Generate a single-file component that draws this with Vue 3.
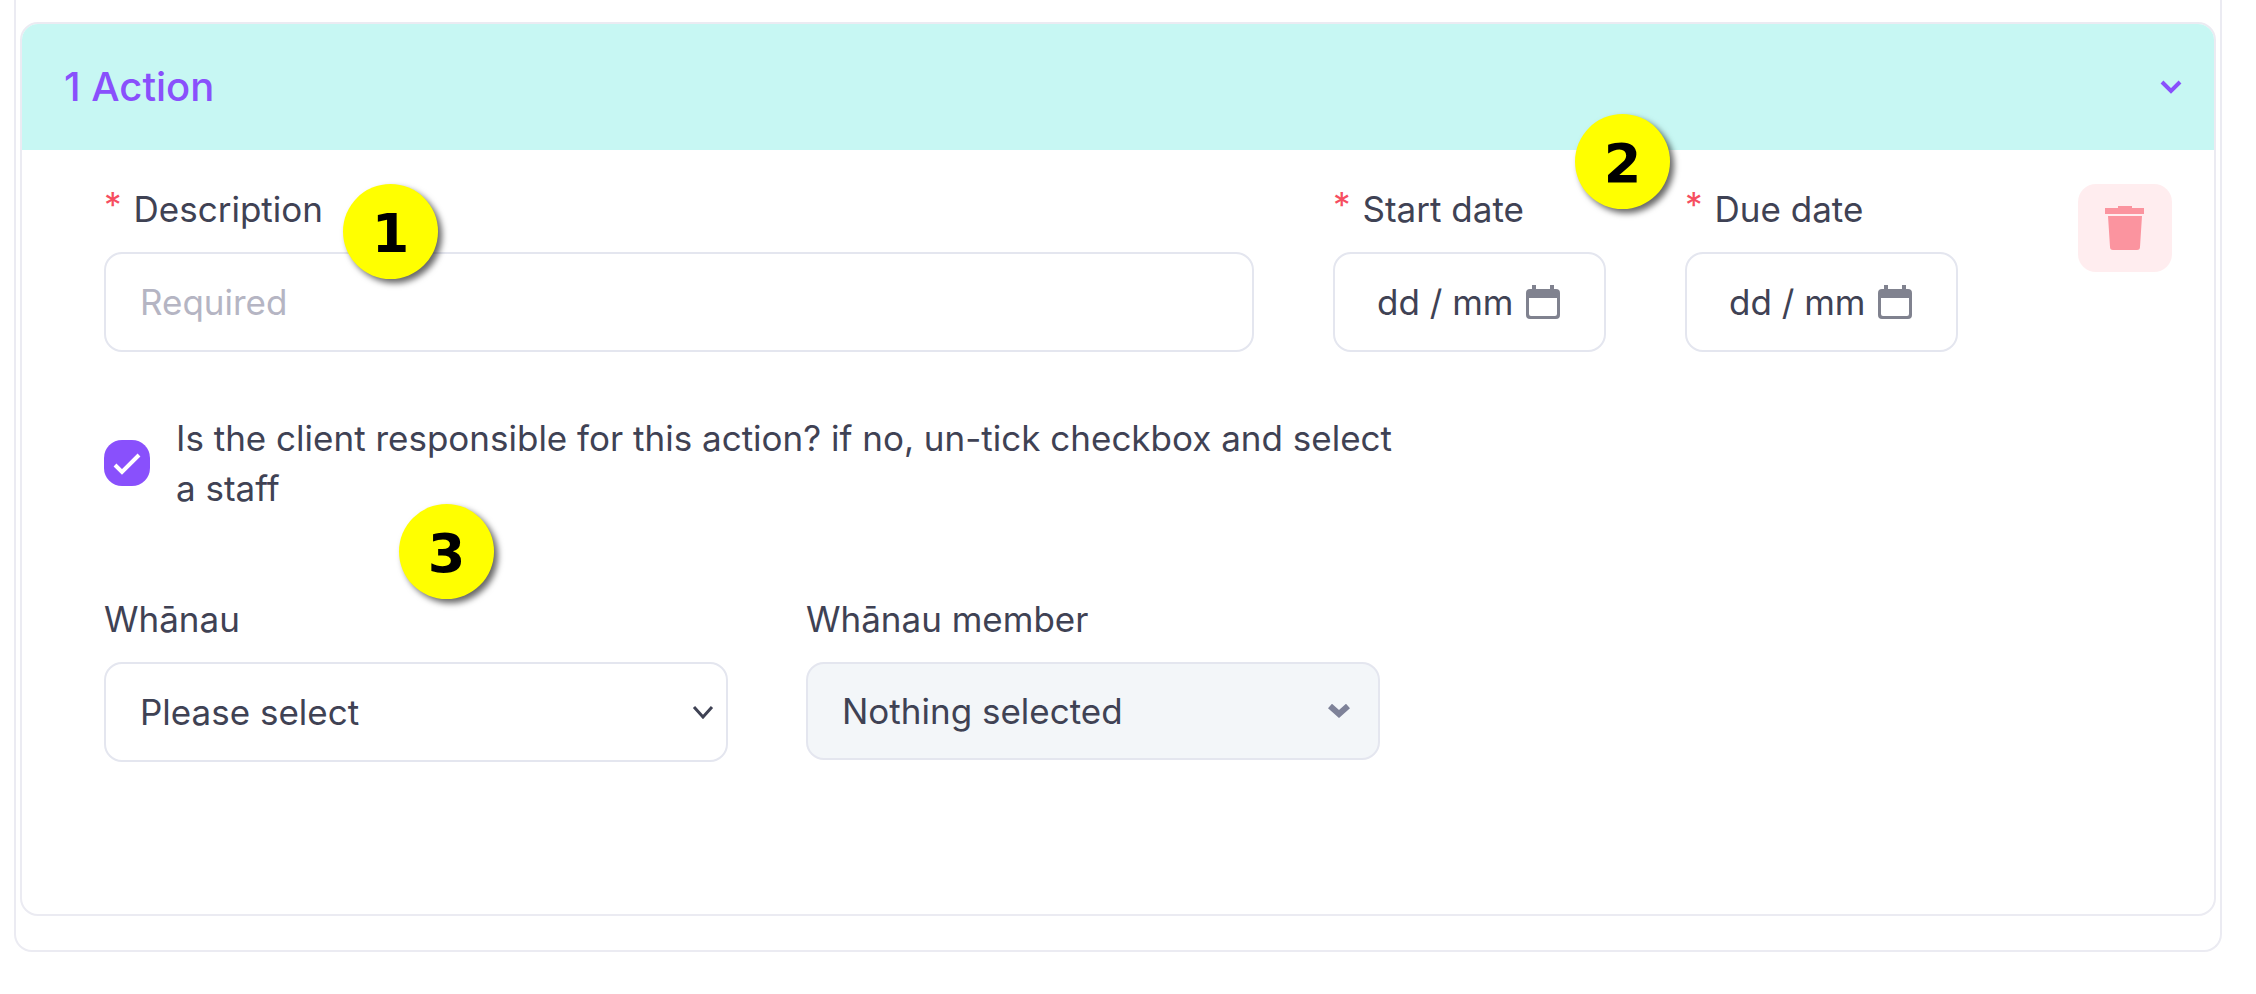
<script setup>
import { reactive, ref } from 'vue';

const isOpen = ref(true);

const action = reactive({
  description: '',
  startDate: '',
  dueDate: '',
  isClientResponsible: true,
  whanau: '',
  member: '',
});

const dateFields = [
  { key: 'startDate', label: 'Start date' },
  { key: 'dueDate', label: 'Due date' },
];

// the box only has room for the day and the month
const formatDate = (value) => {
  if (!value)
    return 'dd / mm';
  const [, month, day] = value.split('-');
  return `${day} / ${month}`;
};

const resetAction = () => {
  action.description = '';
  action.startDate = '';
  action.dueDate = '';
};
</script>

<template>
  <main class="page">
    <div class="panel">
      <section class="card">
        <button
          type="button"
          class="cardHeader"
          :aria-expanded="isOpen"
          @click="isOpen = !isOpen"
        >
          <span>1 Action</span>
          <svg class="headerChevron" width="22" height="14" viewBox="0 0 22 14" fill="none">
            <path d="M2 2L11 11L20 2" stroke-width="4" />
          </svg>
        </button>

        <form v-if="isOpen" class="cardBody" @submit.prevent>
          <div class="mainRow">
            <div class="field">
              <label class="label" for="description"><span class="required">*</span>Description</label>
              <input
                id="description"
                v-model="action.description"
                class="control"
                type="text"
                placeholder="Required"
              >
            </div>

            <div v-for="field in dateFields" :key="field.key" class="field">
              <label class="label" :for="field.key"><span class="required">*</span>{{ field.label }}</label>
              <div class="dateBox">
                <input
                  :id="field.key"
                  v-model="action[field.key]"
                  class="control dateInput"
                  type="date"
                >
                <div class="dateFace" aria-hidden="true">
                  <span class="dateText">{{ formatDate(action[field.key]) }}</span>
                  <svg width="34" height="34" viewBox="0 0 34 34">
                    <path
                      fill-rule="evenodd"
                      d="M6 0H10V4H24V0H28V4H30Q34 4 34 8V30Q34 34 30 34H4Q0 34 0 30V8Q0 4 4 4H6ZM3 13V29Q3 31 5 31H29Q31 31 31 29V13Z"
                    />
                  </svg>
                </div>
              </div>
            </div>

            <button type="button" class="deleteButton" aria-label="Delete action" @click="resetAction">
              <svg width="40" height="46" viewBox="0 0 40 46">
                <path d="M0 3H13V1H27V3H39V9H0Z" />
                <path d="M3 11H37L35 42Q35 45 32 45H8Q5 45 5 42Z" />
              </svg>
            </button>
          </div>

          <div class="checkRow">
            <input
              id="clientResponsible"
              v-model="action.isClientResponsible"
              class="checkbox"
              type="checkbox"
            >
            <svg class="checkMark" width="46" height="46" viewBox="0 0 46 46" fill="none">
              <path d="M11 25L18 32L35 15" stroke-width="4" />
            </svg>
            <label for="clientResponsible">
              Is the client responsible for this action? if no, un-tick checkbox and select a staff
            </label>
          </div>

          <div class="selectRow">
            <div class="field">
              <label class="label" for="whanau">Whānau</label>
              <div class="selectBox">
                <select id="whanau" v-model="action.whanau" class="control">
                  <option value="">Please select</option>
                </select>
                <svg class="selectArrow" width="22" height="14" viewBox="0 0 22 14" fill="none">
                  <path d="M2 2L11 12L20 2" stroke-width="3" />
                </svg>
              </div>
            </div>
            <div class="field">
              <label class="label" for="member">Whānau member</label>
              <div class="selectBox member">
                <select id="member" v-model="action.member" class="control" disabled>
                  <option value="">Nothing selected</option>
                </select>
                <svg class="selectArrow" width="22" height="14" viewBox="0 0 22 14" fill="none">
                  <path d="M2 2L11 10L20 2" stroke-width="6" />
                </svg>
              </div>
            </div>
          </div>
        </form>
      </section>
    </div>

    <span class="marker markerOne">1</span>
    <span class="marker markerTwo">2</span>
    <span class="marker markerThree">3</span>
  </main>
</template>

<style>
body {
  background: #fff;
}
</style>

<style scoped>
.page {
  color: #3f4254;
  font-family: Inter, "Open Sans", sans-serif;
  font-size: 35px;
  line-height: 50px;
  padding: 0 34px 42px 14px;
  position: relative;
}

.page * {
  box-sizing: border-box;
}

.panel {
  border: 2px solid #ebebf2;
  border-radius: 0 0 18px 18px;
  border-top: 0;
  padding: 22px 4px 34px;
}

.card {
  border: 2px solid #ebebf2;
  border-radius: 18px;
  overflow: hidden;
}

.cardHeader {
  align-items: center;
  background: #c7f7f3;
  border: 0;
  color: #8950fc;
  cursor: pointer;
  display: flex;
  font-family: inherit;
  font-size: 40px;
  font-weight: 500;
  justify-content: space-between;
  line-height: 50px;
  padding: 38px 32px 38px 42px;
  width: 100%;
}

.headerChevron {
  stroke: #8950fc;
}

.cardBody {
  padding: 34px 42px 152px 82px;
}

.mainRow {
  align-items: start;
  column-gap: 79px;
  display: grid;
  grid-template-columns: 1150fr 273fr 273fr 135px;
}

.field {
  display: flex;
  flex-direction: column;
  gap: 18px;
  min-width: 0;
}

.label {
  white-space: nowrap;
}

.required {
  color: #f64e60;
  line-height: 1;
  margin-right: 12px;
  vertical-align: 4px;
}

.control {
  appearance: none;
  background: #fff;
  border: 2px solid #e4e6ef;
  border-radius: 18px;
  color: inherit;
  font: inherit;
  height: 100px;
  margin: 0;
  min-width: 0;
  outline: 0;
  padding: 0 34px;
  width: 100%;
}

.control::placeholder {
  color: #b5b5c3;
  opacity: 1;
}

.control:focus {
  border-color: #8950fc;
}

.control:disabled {
  background: #f3f6f9;
  height: 98px;
  opacity: 1;
}

.dateBox,
.selectBox {
  display: grid;
  grid-template-columns: minmax(0, 1fr);
}

.dateBox > *,
.selectBox > * {
  grid-area: 1 / 1;
}

.dateInput::-webkit-datetime-edit {
  opacity: 0;
}

.dateInput::-webkit-calendar-picker-indicator {
  opacity: 0;
}

.dateFace {
  align-items: center;
  display: flex;
  gap: 8px;
  padding: 0 46px 0 44px;
  pointer-events: none;
}

.dateFace svg {
  fill: #80828f;
  flex: none;
}

.dateText {
  flex: 1;
  min-width: 0;
  overflow: hidden;
  white-space: nowrap;
}

.deleteButton {
  align-items: center;
  background: #ffedef;
  border: 0;
  border-radius: 18px;
  cursor: pointer;
  display: flex;
  height: 88px;
  justify-content: center;
  justify-self: end;
  padding: 0;
  width: 94px;
}

.deleteButton svg {
  fill: #fb949f;
}

.checkRow {
  align-items: center;
  column-gap: 26px;
  display: grid;
  grid-template-columns: 46px 1fr;
  margin-top: 61px;
  width: 63%;
}

.checkbox {
  appearance: none;
  background: #ebedf3;
  border-radius: 18px;
  cursor: pointer;
  grid-area: 1 / 1;
  height: 46px;
  margin: 0;
  width: 46px;
}

.checkbox:checked {
  background: #8950fc;
}

.checkMark {
  grid-area: 1 / 1;
  pointer-events: none;
  stroke: #fff;
}

.selectRow {
  column-gap: 78px;
  display: grid;
  grid-template-columns: 624fr 574fr 714fr;
  margin-top: 81px;
}

.selectBox {
  align-items: center;
}

.selectArrow {
  justify-self: end;
  margin-right: 14px;
  pointer-events: none;
  stroke: #3f4254;
}

.member .selectArrow {
  margin-right: 30px;
  stroke: #7e8299;
}

.marker {
  align-items: center;
  background: #ff0;
  border-radius: 50%;
  box-shadow: 4px 4px 6px rgba(0, 0, 0, 0.6);
  color: #000;
  display: flex;
  font-family: "DejaVu Sans", sans-serif;
  font-size: 54px;
  font-weight: 700;
  height: 95px;
  justify-content: center;
  padding-top: 4px;
  position: absolute;
  width: 95px;
}

.markerOne {
  left: 343px;
  top: 184px;
}

.markerTwo {
  left: 1575px;
  top: 114px;
}

.markerThree {
  left: 399px;
  top: 504px;
}
</style>
